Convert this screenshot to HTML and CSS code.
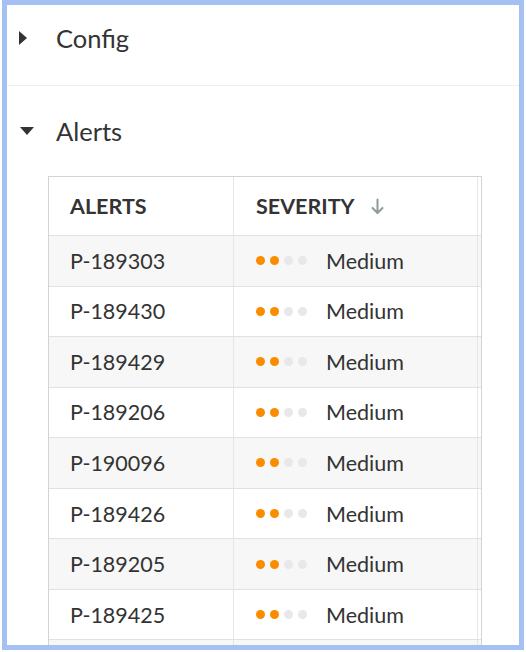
FILE: index.html
```html
<!DOCTYPE html>
<html lang="en">
<head>
<meta charset="utf-8">
<title>Alerts</title>
<link rel="stylesheet" href="styles.css">
</head>
<body>
<div class="frame">
  <section class="section section-config">
    <div class="section-header">
      <span class="caret caret-right"></span>
      <span class="section-title">Config</span>
    </div>
  </section>
  <section class="section section-alerts">
    <div class="section-header">
      <span class="caret caret-down"></span>
      <span class="section-title">Alerts</span>
    </div>
    <div class="table-wrap">
      <table class="alerts-table">
        <thead>
          <tr>
            <th class="col-id">ALERTS</th>
            <th class="col-sev">SEVERITY <span class="sort-arrow"><svg width="13" height="17" viewBox="0 0 13 17"><path d="M6.5 1.5v13M1.5 10l5 5 5-5" fill="none" stroke="#8c9a9a" stroke-width="2" stroke-linecap="round" stroke-linejoin="round"/></svg></span></th>
            <th class="col-rest"></th>
          </tr>
        </thead>
        <tbody>
          <tr><td>P-189303</td><td><span class="sev"><span class="dots"><i class="on"></i><i class="on"></i><i></i><i></i></span>Medium</span></td><td></td></tr>
          <tr><td>P-189430</td><td><span class="sev"><span class="dots"><i class="on"></i><i class="on"></i><i></i><i></i></span>Medium</span></td><td></td></tr>
          <tr><td>P-189429</td><td><span class="sev"><span class="dots"><i class="on"></i><i class="on"></i><i></i><i></i></span>Medium</span></td><td></td></tr>
          <tr><td>P-189206</td><td><span class="sev"><span class="dots"><i class="on"></i><i class="on"></i><i></i><i></i></span>Medium</span></td><td></td></tr>
          <tr><td>P-190096</td><td><span class="sev"><span class="dots"><i class="on"></i><i class="on"></i><i></i><i></i></span>Medium</span></td><td></td></tr>
          <tr><td>P-189426</td><td><span class="sev"><span class="dots"><i class="on"></i><i class="on"></i><i></i><i></i></span>Medium</span></td><td></td></tr>
          <tr><td>P-189205</td><td><span class="sev"><span class="dots"><i class="on"></i><i class="on"></i><i></i><i></i></span>Medium</span></td><td></td></tr>
          <tr><td>P-189425</td><td><span class="sev"><span class="dots"><i class="on"></i><i class="on"></i><i></i><i></i></span>Medium</span></td><td></td></tr>
          <tr class="clipped"><td></td><td></td><td></td></tr>
        </tbody>
      </table>
    </div>
  </section>
</div>
</body>
</html>
```
FILE: styles.css
```css
html, body {
  margin: 0;
  padding: 0;
  background: #ffffff;
}
body {
  font-family: Lato, "Noto Sans", sans-serif;
  color: #333333;
}
.frame {
  box-sizing: border-box;
  margin-left: 2px;
  width: 522px;
  height: 650px;
  border: 5px solid #a5c1f3;
  overflow: hidden;
  background: #fff;
}
.section-config {
  padding-bottom: 10px;
  border-bottom: 1px solid #f0f0f0;
}
.section-header {
  height: 70px;
  display: flex;
  align-items: center;
}
.section-config .section-header {
  margin-top: -2px;
  margin-bottom: 2px;
}
.section-alerts .section-header {
  margin-top: 10px;
  margin-bottom: 1px;
}
.caret {
  width: 0;
  height: 0;
  display: block;
}
.caret-right {
  margin-left: 12px;
  margin-right: 29px;
  border-top: 7px solid transparent;
  border-bottom: 7px solid transparent;
  border-left: 8px solid #333;
}
.caret-down {
  margin-left: 13px;
  margin-right: 22px;
  border-left: 7px solid transparent;
  border-right: 7px solid transparent;
  border-top: 8px solid #333;
}
.section-title {
  font-size: 25.5px;
  color: #333;
}
.table-wrap {
  margin: 10px 0 0 41px;
  width: 434px;
  border: 1px solid #cfd4d8;
  border-bottom: none;
  box-sizing: border-box;
}
.alerts-table {
  width: 100%;
  border-collapse: collapse;
  table-layout: fixed;
}
.alerts-table th,
.alerts-table td {
  text-align: left;
  padding: 0 0 0 21px;
  border-bottom: 1px solid #dfe2e4;
  border-right: 1px solid #e4e6e8;
  white-space: nowrap;
}
.alerts-table th.col-id { width: 163px; }
.alerts-table th.col-rest { width: 3px; padding: 0; border-right: none; }
.alerts-table td:last-child { padding: 0; border-right: none; }
.alerts-table th {
  height: 58px;
  font-size: 21.5px;
  font-weight: 700;
  color: #333;
  background: #fff;
}
.alerts-table th.col-sev { padding-left: 22px; }
.alerts-table td {
  height: 49.55px;
  font-size: 21.5px;
  color: #333;
}
.alerts-table td + td { padding-left: 22px; }
.alerts-table tbody tr:nth-child(odd) td {
  background: #f7f7f7;
}
.sort-arrow {
  display: inline-block;
  margin-left: 12px;
  vertical-align: -1px;
}
.sev {
  display: flex;
  align-items: center;
}
.dots {
  display: flex;
  gap: 5px;
  margin-right: 19px;
}
.dots i {
  display: block;
  width: 9px;
  height: 9px;
  border-radius: 50%;
  background: #e8e8e8;
}
.dots i.on {
  background: #fb8c00;
}
```
